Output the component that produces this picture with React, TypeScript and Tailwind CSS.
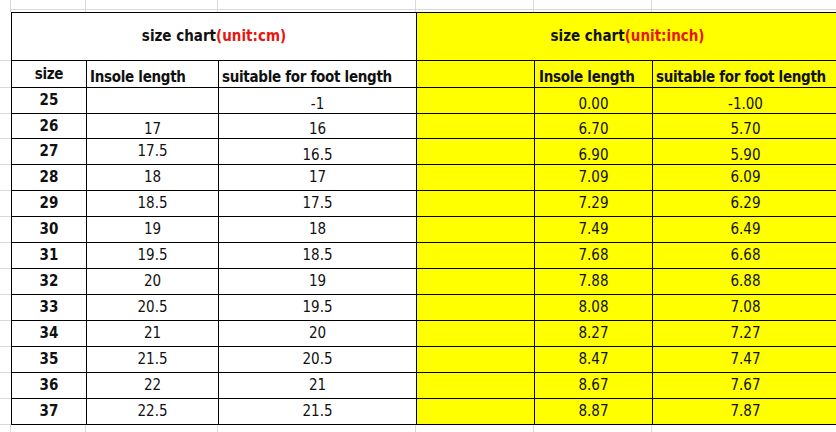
import React from "react";

// Spreadsheet-like size chart (cm / inch)
const GRID = "border-[#d9d9d9]";
const widths = [75, 132, 198, 118, 118, 186];
const rowHeights = [26, 25, 26, 26, 26, 26, 26, 26, 26, 26, 26, 26, 26];

type Row = {
    size: string;
    insole: string;
    foot: string;
    inInsole: string;
    inFoot: string;
    low?: boolean[]; // cells sitting lower in the row (bottom aligned in the sheet)
};

const rows: Row[] = [
    { size: "25", insole: "", foot: "-1", inInsole: "0.00", inFoot: "-1.00", low: [false, true, true, true, true] },
    { size: "26", insole: "17", foot: "16", inInsole: "6.70", inFoot: "5.70", low: [false, true, true, true, true] },
    { size: "27", insole: "17.5", foot: "16.5", inInsole: "6.90", inFoot: "5.90", low: [false, false, true, true, true] },
    { size: "28", insole: "18", foot: "17", inInsole: "7.09", inFoot: "6.09" },
    { size: "29", insole: "18.5", foot: "17.5", inInsole: "7.29", inFoot: "6.29" },
    { size: "30", insole: "19", foot: "18", inInsole: "7.49", inFoot: "6.49" },
    { size: "31", insole: "19.5", foot: "18.5", inInsole: "7.68", inFoot: "6.68" },
    { size: "32", insole: "20", foot: "19", inInsole: "7.88", inFoot: "6.88" },
    { size: "33", insole: "20.5", foot: "19.5", inInsole: "8.08", inFoot: "7.08" },
    { size: "34", insole: "21", foot: "20", inInsole: "8.27", inFoot: "7.27" },
    { size: "35", insole: "21.5", foot: "20.5", inInsole: "8.47", inFoot: "7.47" },
    { size: "36", insole: "22", foot: "21", inInsole: "8.67", inFoot: "7.67" },
    { size: "37", insole: "22.5", foot: "21.5", inInsole: "8.87", inFoot: "7.87" },
];

function Cell({
    w,
    children,
    yellow,
    bold,
    low,
}: {
    w: number;
    children?: React.ReactNode;
    yellow?: boolean;
    bold?: boolean;
    low?: boolean;
}) {
    return (
        <div
            style={{ width: w }}
            className={`shrink-0 flex justify-center border-r border-black ${low ? "items-end pb-[1px]" : "items-center"} ${yellow ? "bg-[#ffff00]" : "bg-white"} ${bold ? "font-bold" : ""}`}
        >
            {children}
        </div>
    );
}

export default function App() {
    return (
        <div className="w-[836px] h-[432px] overflow-hidden bg-white text-[15px] leading-none text-[#111] font-['DejaVu_Sans_Condensed','DejaVu_Sans',sans-serif]">
            {/* Top gridline strip */}
            <div className="flex h-[12px]">
                <div className={`w-[11px] shrink-0 border-r ${GRID}`}></div>
                {widths.map((w, i) => (
                    <div key={i} style={{ width: w }} className={`shrink-0 border-r ${GRID} relative`}>
                        <div className={`absolute left-0 right-0 top-[9px] border-t ${GRID}`}></div>
                    </div>
                ))}
            </div>

            <div className="flex">
                {/* Left gridline margin */}
                <div className="w-[11px] shrink-0 flex flex-col pt-[1px]">
                    <div className={`h-[48px] border-b ${GRID}`}></div>
                    <div className={`h-[27px] border-b ${GRID}`}></div>
                    {rowHeights.map((h, i) => (
                        <div key={i} style={{ height: h }} className={`border-b ${GRID}`}></div>
                    ))}
                </div>

                {/* Table */}
                <div className="shrink-0 flex flex-col border-l border-t border-black">
                    <div className="flex h-[48px] border-b border-black font-bold">
                        <Cell w={405}>
                            <span>
                                size chart<span className="text-[#e8160c]">(unit:cm)</span>
                            </span>
                        </Cell>
                        <Cell w={422} yellow>
                            <span>
                                size chart<span className="text-[#e8160c]">(unit:inch)</span>
                            </span>
                        </Cell>
                    </div>

                    <div className="flex h-[27px] border-b border-black font-bold tracking-[-0.3px]">
                        <Cell w={75}>size</Cell>
                        <div className="w-[132px] shrink-0 border-r border-black flex items-end pb-[2px] pl-[3px]">Insole length</div>
                        <div className="w-[198px] shrink-0 border-r border-black flex items-end pb-[2px] pl-[3px]">suitable for foot length</div>
                        <div className="w-[118px] shrink-0 border-r border-black bg-[#ffff00]"></div>
                        <div className="w-[118px] shrink-0 border-r border-black bg-[#ffff00] flex items-end pb-[2px] pl-[4px]">Insole length</div>
                        <div className="w-[186px] shrink-0 border-r border-black bg-[#ffff00] flex items-end pb-[2px] pl-[3px] whitespace-nowrap">suitable for foot length</div>
                    </div>

                    {rows.map((r, i) => {
                        const low = r.low ?? [];
                        return (
                            <div key={r.size} style={{ height: rowHeights[i] }} className="flex border-b border-black">
                                <Cell w={75} bold>{r.size}</Cell>
                                <Cell w={132} low={low[1]}>{r.insole}</Cell>
                                <Cell w={198} low={low[2]}>{r.foot}</Cell>
                                <Cell w={118} yellow></Cell>
                                <Cell w={118} yellow low={low[3]}>{r.inInsole}</Cell>
                                <Cell w={186} yellow low={low[4]}>{r.inFoot}</Cell>
                            </div>
                        );
                    })}
                </div>
            </div>

            {/* Bottom gridline strip */}
            <div className="flex h-[10px]">
                <div className={`w-[11px] shrink-0 border-r ${GRID}`}></div>
                {widths.map((w, i) => (
                    <div key={i} style={{ width: w }} className={`shrink-0 border-r ${GRID}`}></div>
                ))}
            </div>
        </div>
    );
}
